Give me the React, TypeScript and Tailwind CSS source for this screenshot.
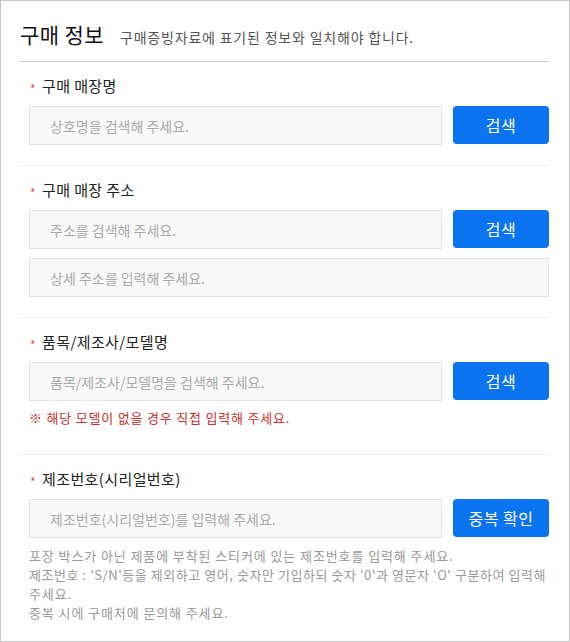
import React from 'react';

const font = { fontFamily: '"Noto Sans CJK KR", "Noto Sans", sans-serif' };

const Label: React.FC<{ text: string }> = ({ text }) => (
  <div className="flex items-center h-[22px] mb-[9px]">
    <span className="text-[12px] text-[#d9534f] w-[13px] pt-[5px] pl-[1px]">*</span>
    <span className="text-[15px] text-[#222] leading-[22px] tracking-[0.4px]">{text}</span>
  </div>
);

const Field: React.FC<{ placeholder: string }> = ({ placeholder }) => (
  <input
    type="text"
    placeholder={placeholder}
    className="flex-1 min-w-0 h-[39px] bg-[#f8f8f8] border border-[#e2e2e2] px-[20px] text-[14px] text-[#333] placeholder:text-[#aaaaaa] outline-none"
    style={font}
  />
);

const SearchButton: React.FC<{ text: string }> = ({ text }) => (
  <button
    type="button"
    className="w-[96px] h-[38px] rounded-[4px] bg-[#0a74f0] text-white text-[16px] tracking-[0.5px] shrink-0"
    style={font}
  >
    {text}
  </button>
);

const Section: React.FC<{ children: React.ReactNode; last?: boolean }> = ({ children, last }) => (
  <div className={`pl-[9px] pt-[13px] ${last ? '' : 'pb-[20px] border-b border-[#eeeeee]'}`}>{children}</div>
);

export default function App() {
  return (
    <div className="w-[570px] h-[642px] bg-white border border-[#c4c4c4] pl-[19px] pr-[20px] overflow-hidden" style={font}>
      <div className="flex items-baseline gap-[16px] pt-[19px] pb-[13px] border-b border-[#cccccc]">
        <h2 className="text-[21px] leading-[28px] text-[#111] font-normal tracking-[0.4px]">구매 정보</h2>
        <p className="text-[14px] text-[#555] tracking-[0.8px]">구매증빙자료에 표기된 정보와 일치해야 합니다.</p>
      </div>

      <Section>
        <Label text="구매 매장명" />
        <div className="flex gap-[11px]">
          <Field placeholder="상호명을 검색해 주세요." />
          <SearchButton text="검색" />
        </div>
      </Section>

      <Section>
        <Label text="구매 매장 주소" />
        <div className="flex gap-[11px]">
          <Field placeholder="주소를 검색해 주세요." />
          <SearchButton text="검색" />
        </div>
        <div className="flex mt-[9px]">
          <Field placeholder="상세 주소를 입력해 주세요." />
        </div>
      </Section>

      <Section>
        <Label text="품목/제조사/모델명" />
        <div className="flex gap-[11px]">
          <Field placeholder="품목/제조사/모델명을 검색해 주세요." />
          <SearchButton text="검색" />
        </div>
        <p className="mt-[7px] mb-[6px] text-[13px] leading-[20px] text-[#c8312c] tracking-[0.8px]">※ 해당 모델이 없을 경우 직접 입력해 주세요.</p>
      </Section>

      <Section last>
        <Label text="제조번호(시리얼번호)" />
        <div className="flex gap-[11px]">
          <Field placeholder="제조번호(시리얼번호)를 입력해 주세요." />
          <SearchButton text="중복 확인" />
        </div>
        <div className="mt-[8px] text-[13px] leading-[19px] text-[#999999] tracking-[0.9px] whitespace-nowrap">
          <p>포장 박스가 아닌 제품에 부착된 스티커에 있는 제조번호를 입력해 주세요.</p>
          <p className="tracking-[0.55px]">제조번호 : 'S/N'등을 제외하고 영어, 숫자만 기입하되 숫자 '0'과 영문자 'O' 구분하여 입력해</p>
          <p>주세요.</p>
          <p>중복 시에 구매처에 문의해 주세요.</p>
        </div>
      </Section>
    </div>
  );
}
